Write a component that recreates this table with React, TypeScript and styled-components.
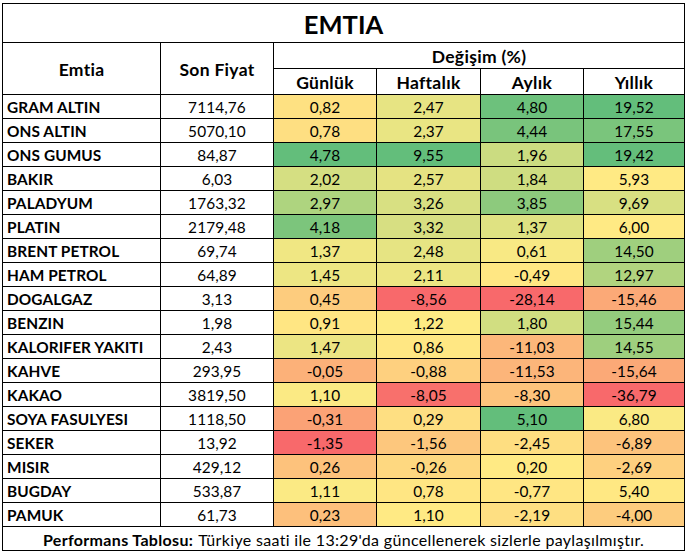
import React from "react";
import styled, { createGlobalStyle } from "styled-components";

const Global = createGlobalStyle`
  html, body { margin: 0; padding: 0; background: #ffffff; }
  body { font-family: Lato, "Open Sans", sans-serif; color: #000; }
`;

type Row = { name: string; price: string; d: number; w: number; m: number; y: number };

const rows: Row[] = [
  { name: "GRAM ALTIN", price: "7114,76", d: 0.82, w: 2.47, m: 4.8, y: 19.52 },
  { name: "ONS ALTIN", price: "5070,10", d: 0.78, w: 2.37, m: 4.44, y: 17.55 },
  { name: "ONS GUMUS", price: "84,87", d: 4.78, w: 9.55, m: 1.96, y: 19.42 },
  { name: "BAKIR", price: "6,03", d: 2.02, w: 2.57, m: 1.84, y: 5.93 },
  { name: "PALADYUM", price: "1763,32", d: 2.97, w: 3.26, m: 3.85, y: 9.69 },
  { name: "PLATIN", price: "2179,48", d: 4.18, w: 3.32, m: 1.37, y: 6.0 },
  { name: "BRENT PETROL", price: "69,74", d: 1.37, w: 2.48, m: 0.61, y: 14.5 },
  { name: "HAM PETROL", price: "64,89", d: 1.45, w: 2.11, m: -0.49, y: 12.97 },
  { name: "DOGALGAZ", price: "3,13", d: 0.45, w: -8.56, m: -28.14, y: -15.46 },
  { name: "BENZIN", price: "1,98", d: 0.91, w: 1.22, m: 1.8, y: 15.44 },
  { name: "KALORIFER YAKITI", price: "2,43", d: 1.47, w: 0.86, m: -11.03, y: 14.55 },
  { name: "KAHVE", price: "293,95", d: -0.05, w: -0.88, m: -11.53, y: -15.64 },
  { name: "KAKAO", price: "3819,50", d: 1.1, w: -8.05, m: -8.3, y: -36.79 },
  { name: "SOYA FASULYESI", price: "1118,50", d: -0.31, w: 0.29, m: 5.1, y: 6.8 },
  { name: "SEKER", price: "13,92", d: -1.35, w: -1.56, m: -2.45, y: -6.89 },
  { name: "MISIR", price: "429,12", d: 0.26, w: -0.26, m: 0.2, y: -2.69 },
  { name: "BUGDAY", price: "533,87", d: 1.11, w: 0.78, m: -0.77, y: 5.4 },
  { name: "PAMUK", price: "61,73", d: 0.23, w: 1.1, m: -2.19, y: -4.0 },
];

const RED = [248, 105, 107];
const YEL = [255, 235, 132];
const GRN = [99, 190, 123];

function makeScale(vals: number[]) {
  const s = [...vals].sort((a, b) => a - b);
  const min = s[0];
  const max = s[s.length - 1];
  const pos = 0.5 * (s.length - 1);
  const lo = Math.floor(pos);
  const mid = s[lo] + (s[lo + 1] - s[lo]) * (pos - lo);
  return (v: number) => {
    let a: number[], b: number[], t: number;
    if (v <= mid) {
      a = RED; b = YEL; t = (v - min) / (mid - min);
    } else {
      a = YEL; b = GRN; t = (v - mid) / (max - mid);
    }
    t = Math.max(0, Math.min(1, t));
    const c = a.map((x, i) => Math.round(x + (b[i] - x) * t));
    return `rgb(${c[0]},${c[1]},${c[2]})`;
  };
}

const keys: (keyof Row)[] = ["d", "w", "m", "y"];
const scales = keys.map((k) => makeScale(rows.map((r) => r[k] as number)));

const fmt = (v: number) => v.toFixed(2).replace(".", ",");

const Page = styled.div`
  padding: 3px 0 0 2px;
`;

const Grid = styled.div`
  display: grid;
  grid-template-columns: 158px 113px 103px 104px 103px 101px;
  grid-template-rows: 39px 26px 26px repeat(18, 24px) 24px;
  width: 683px;
  box-sizing: border-box;
  border-top: 1px solid #000;
  border-left: 1px solid #000;
`;

const Cell = styled.div<{ $bg?: string; $align?: "left" | "center" }>`
  box-sizing: border-box;
  border-right: 1px solid #000;
  border-bottom: 1px solid #000;
  display: flex;
  align-items: center;
  justify-content: ${(p) => (p.$align === "left" ? "flex-start" : "center")};
  padding: ${(p) => (p.$align === "left" ? "1px 0 0 4px" : "1px 0 0 0")};
  background: ${(p) => p.$bg || "#ffffff"};
  font-size: 15.4px;
  letter-spacing: 0.1px;
  white-space: nowrap;
  overflow: hidden;
`;

const Title = styled(Cell)`
  grid-column: 1 / -1;
  font-size: 25.5px;
  font-weight: 700;
  letter-spacing: 0;
  padding-top: 2px;
`;

const Head = styled(Cell)<{ $span?: boolean }>`
  font-weight: 700;
  font-size: 17.5px;
  letter-spacing: 0.3px;
  ${(p) => (p.$span ? "grid-row: span 2;" : "")}
`;

const GroupHead = styled(Cell)`
  grid-column: span 4;
  font-weight: 700;
  font-size: 17.5px;
  letter-spacing: 0.3px;
`;

const Name = styled(Cell)`
  font-weight: 700;
`;

const Footer = styled(Cell)`
  grid-column: 1 / -1;
  font-size: 16px;
  letter-spacing: 0.33px;
`;

const Strong = styled.b`
  font-weight: 700;
  margin-right: 5px;
`;

export default function App() {
  return (
    <Page>
      <Global />
      <Grid>
        <Title>EMTIA</Title>
        <Head $span>Emtia</Head>
        <Head $span>Son Fiyat</Head>
        <GroupHead>Değişim (%)</GroupHead>
        <Head>Günlük</Head>
        <Head>Haftalık</Head>
        <Head>Aylık</Head>
        <Head>Yıllık</Head>
        {rows.map((r) => (
          <React.Fragment key={r.name}>
            <Name $align="left">{r.name}</Name>
            <Cell>{r.price}</Cell>
            {keys.map((k, i) => (
              <Cell key={k} $bg={scales[i](r[k] as number)}>
                {fmt(r[k] as number)}
              </Cell>
            ))}
          </React.Fragment>
        ))}
        <Footer>
          <Strong>Performans Tablosu:</Strong>
          Türkiye saati ile 13:29'da güncellenerek sizlerle paylaşılmıştır.
        </Footer>
      </Grid>
    </Page>
  );
}
